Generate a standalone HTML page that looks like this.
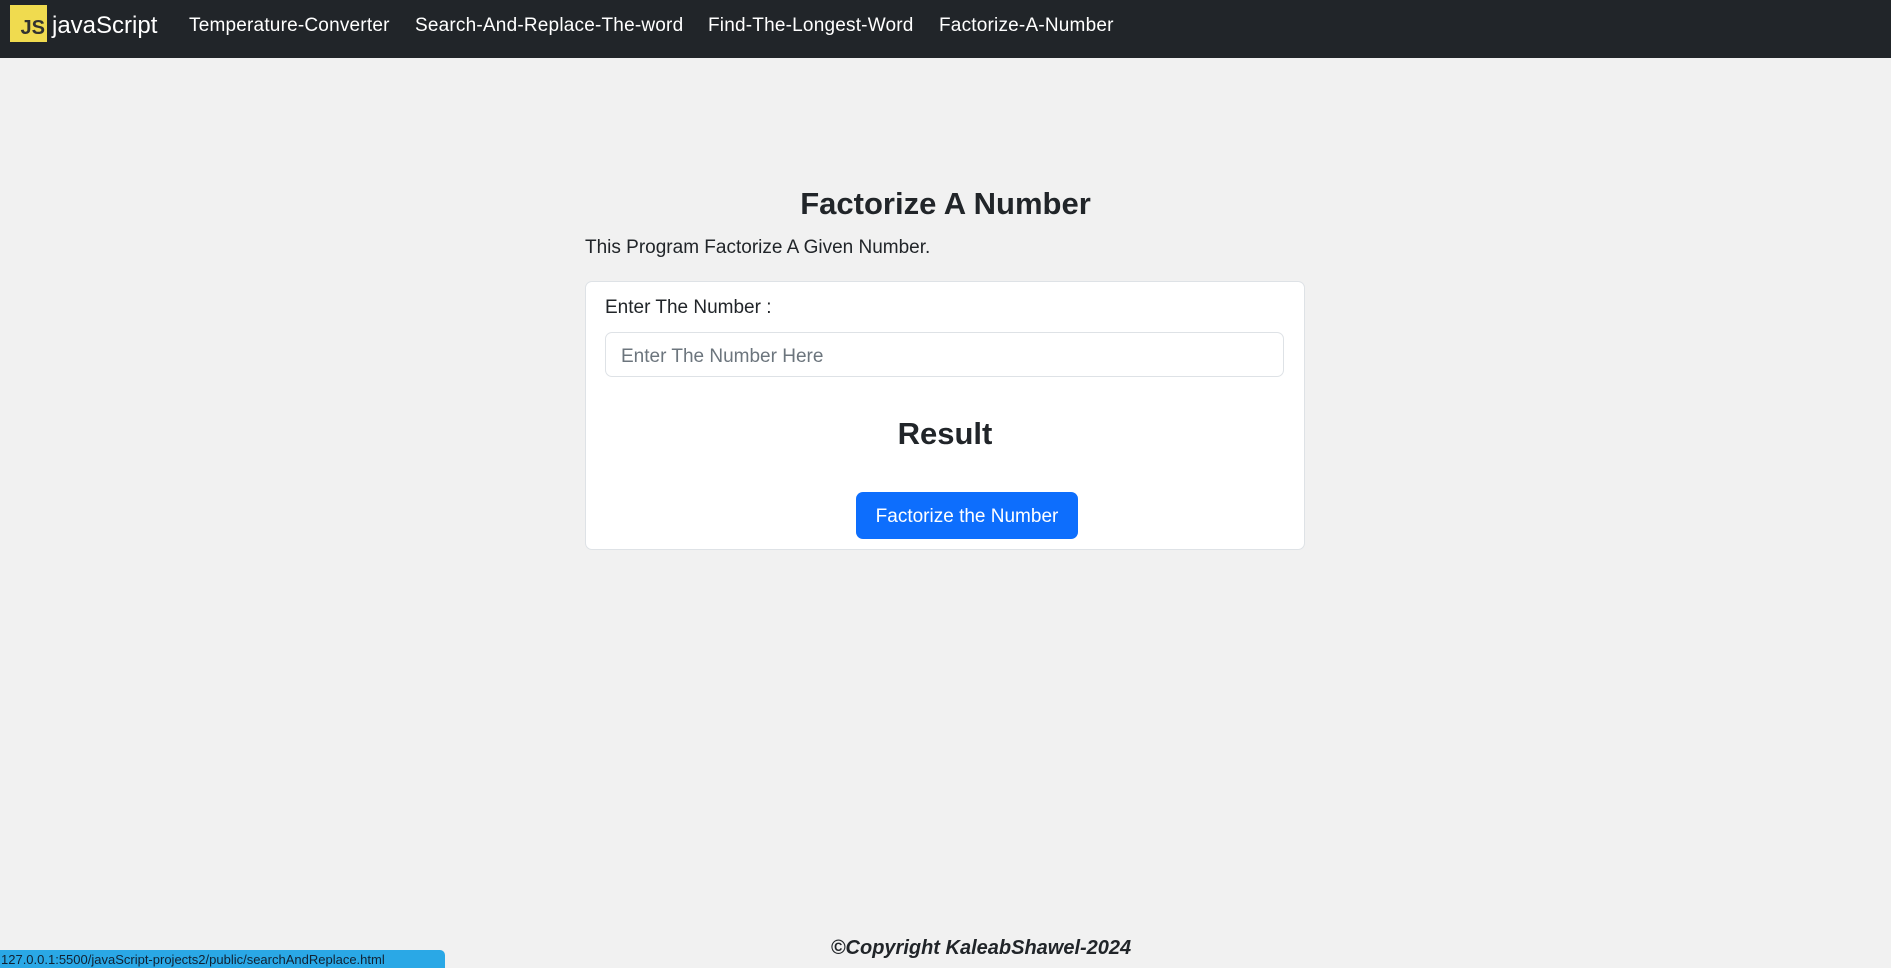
<!DOCTYPE html>
<html><head><meta charset="utf-8"><style>
*{box-sizing:border-box;margin:0;padding:0}
body{width:1891px;height:968px;background:#f1f1f1;font-family:"Liberation Sans",sans-serif;color:#212529;position:relative;overflow:hidden}
nav{position:absolute;left:0;top:0;width:1891px;height:58px;background:#212529}
.logo{position:absolute;left:10px;top:5px;width:37px;height:37px;background:#f0db4f;color:#323330;font-weight:bold;font-size:20px;display:flex;align-items:flex-end;justify-content:flex-end;padding:0 2px 2px 0}
.brand{position:absolute;left:52px;top:12px;font-size:24px;color:#fff}
.l{position:absolute;top:15px;font-size:19px;color:#fff;letter-spacing:0.2px}
h1{position:absolute;left:0;width:1891px;text-align:center;top:186px;font-size:31px;font-weight:800}
.desc{position:absolute;left:585px;top:237px;font-size:19px}
.card{position:absolute;left:585px;top:281px;width:720px;height:269px;background:#fff;border:1px solid #dee2e6;border-radius:7px}
.lab{position:absolute;left:605px;top:297px;font-size:19px}
.inp{position:absolute;left:605px;top:332px;width:679px;height:45px;border:1px solid #dee2e6;border-radius:7px;background:#fff;font-size:19px;color:#6c757d;padding:13px 15px}
h2{position:absolute;left:585px;width:720px;text-align:center;top:416px;font-size:31px;font-weight:bold}
.btn{position:absolute;left:856px;top:492px;width:222px;height:47px;background:#0d6efd;color:#fff;border-radius:7px;font-size:19px;text-align:center;line-height:50px}
.foot{position:absolute;left:0;width:1962px;text-align:center;top:937px;font-size:20px;font-weight:bold;font-style:italic}
.status{position:absolute;left:0;top:950px;width:445px;height:18px;background:#2aa8e6;border-top-right-radius:5px;font-size:13px;color:#123;padding-left:1px;line-height:20px;white-space:nowrap;overflow:hidden}
</style></head><body>
<nav>
<div class="logo">JS</div>
<div class="brand">javaScript</div>
<div class="l" style="left:189px">Temperature-Converter</div>
<div class="l" style="left:415px">Search-And-Replace-The-word</div>
<div class="l" style="left:708px">Find-The-Longest-Word</div>
<div class="l" style="left:939px">Factorize-A-Number</div>
</nav>
<h1>Factorize A Number</h1>
<div class="desc">This Program Factorize A Given Number.</div>
<div class="card"></div>
<div class="lab">Enter The Number :</div>
<div class="inp">Enter The Number Here</div>
<h2>Result</h2>
<div class="btn">Factorize the Number</div>
<div class="foot">©Copyright KaleabShawel-2024</div>
<div class="status">127.0.0.1:5500/javaScript-projects2/public/searchAndReplace.html</div>
</body></html>
